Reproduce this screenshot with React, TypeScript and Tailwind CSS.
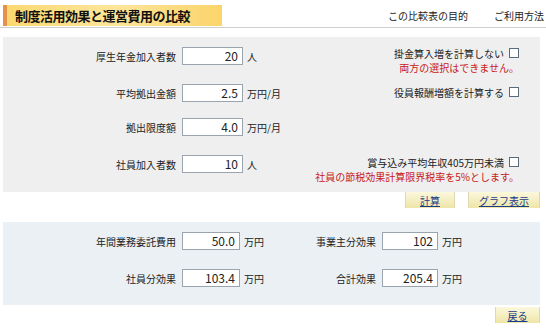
import React from "react";

const jp = "font-['Noto_Sans_CJK_JP','Noto_Sans',sans-serif]";

function Field({ label, value, unit, labelW = "w-[179px]", inputW = "w-[61px]" }: { label: string; value: string; unit: string; labelW?: string; inputW?: string }) {
  return (
    <div className="flex items-center h-[18px]">
      <div className={`${labelW} shrink-0 text-right pr-[6px] text-[10px] text-[#222]`}>{label}</div>
      <div className={`${inputW} h-[18px] shrink-0 bg-white border border-[#9aa4ae] text-right pr-[4px] text-[12px] leading-[16px] text-[#222]`}>
        {value}
      </div>
      <div className="ml-[4px] text-[10px] text-[#222] whitespace-nowrap">{unit}</div>
    </div>
  );
}

function Check({ label, note }: { label: string; note?: string }) {
  return (
    <div className="flex flex-col items-end">
      <div className="flex items-center gap-[5px] h-[16px]">
        <span className="text-[10px] text-[#222]">{label}</span>
        <span className="w-[10px] h-[10px] border border-[#5a6b7c] bg-white" />
      </div>
      {note && <div className="text-[10px] leading-[14px] text-[#c82020]">{note}</div>}
    </div>
  );
}

function Btn({ children, w }: { children: React.ReactNode; w: string }) {
  return (
    <div className={`${w} h-[16px] flex items-center justify-center bg-gradient-to-b from-[#fbf8dc] to-[#efe5a8] border-x border-[#e0d8b0] text-[10px] text-[#1a3a8a] underline`}>
      {children}
    </div>
  );
}

export default function App() {
  return (
    <div className={`w-[546px] h-[329px] bg-white ${jp} overflow-hidden`}>
      <div className="flex items-end justify-between pl-[3px] pt-[5px] pr-[2px] border-b border-[#cfcfcf] h-[28px]">
        <div className="w-[219px] h-[21px] flex items-center bg-gradient-to-r from-[#fcd870] via-[#fde59a] to-[#fbd46a] border-l-[4px] border-[#e8904a] pl-[8px] self-start">
          <span className="text-[13px] font-bold text-[#111] tracking-[-0.5px]">制度活用効果と運営費用の比較</span>
        </div>
        <div className="flex gap-[26px] text-[10px] text-[#222] pb-[4px]">
          <span>この比較表の目的</span>
          <span>ご利用方法</span>
        </div>
      </div>

      <div className="mx-[3px] mt-[9px] w-[537px] bg-[#efefef] pt-[10px] h-[155px]">
        <div className="flex h-[37px]">
          <Field label="厚生年金加入者数" value="20" unit="人" />
          <div className="flex-1 flex justify-end pr-[21px] -mt-[2px]">
            <Check label="掛金算入増を計算しない" note="両方の選択はできません。" />
          </div>
        </div>
        <div className="flex h-[34px]">
          <Field label="平均拠出金額" value="2.5" unit="万円/月" />
          <div className="flex-1 flex justify-end pr-[21px]">
            <Check label="役員報酬増額を計算する" />
          </div>
        </div>
        <div className="flex h-[37px]">
          <Field label="拠出限度額" value="4.0" unit="万円/月" />
        </div>
        <div className="flex">
          <Field label="社員加入者数" value="10" unit="人" />
          <div className="flex-1 flex justify-end pr-[21px] -mt-[1px]">
            <Check label="賞与込み平均年収405万円未満" note="社員の節税効果計算限界税率を5%とします。" />
          </div>
        </div>
      </div>

      <div className="flex justify-end gap-[13px] pr-[6px] h-[16px]">
        <Btn w="w-[50px]">計算</Btn>
        <Btn w="w-[72px]">グラフ表示</Btn>
      </div>

      <div className="mx-[3px] mt-[14px] w-[537px] h-[83px] bg-[#ebf0f4] pt-[10px]">
        <div className="flex h-[37px]">
          <div className="w-[265px]">
            <Field label="年間業務委託費用" value="50.0" unit="万円" inputW="w-[58px]" />
          </div>
          <Field label="事業主分効果" value="102" unit="万円" labelW="w-[114px]" inputW="w-[56px]" />
        </div>
        <div className="flex">
          <div className="w-[265px]">
            <Field label="社員分効果" value="103.4" unit="万円" inputW="w-[58px]" />
          </div>
          <Field label="合計効果" value="205.4" unit="万円" labelW="w-[114px]" inputW="w-[56px]" />
        </div>
      </div>

      <div className="flex justify-end pr-[6px] mt-[2px]">
        <Btn w="w-[45px]">戻る</Btn>
      </div>
    </div>
  );
}
